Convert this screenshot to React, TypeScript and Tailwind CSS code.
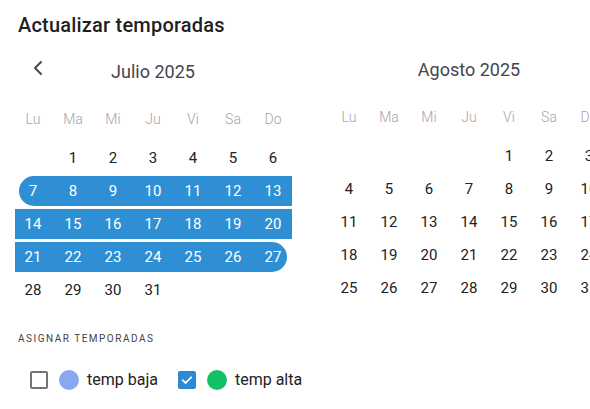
import { ChevronLeft } from "lucide-react";

const WEEKDAYS = ["Lu", "Ma", "Mi", "Ju", "Vi", "Sa", "Do"];

type Week = (number | null)[];

function buildWeeks(offset: number, days: number): Week[] {
  const cells: (number | null)[] = Array(offset).fill(null);
  for (let d = 1; d <= days; d++) cells.push(d);
  while (cells.length % 7) cells.push(null);
  const weeks: Week[] = [];
  for (let i = 0; i < cells.length; i += 7) weeks.push(cells.slice(i, i + 7));
  return weeks;
}

function WeekRow({ week, band }: { week: Week; band?: "start" | "mid" | "end" }) {
  const cells = (
    <div className="grid grid-cols-7 h-[30px] items-center">
      {week.map((d, i) => (
        <span key={i} className={`text-center text-[15px] ${band ? "text-white" : "text-[#222]"}`}>
          {d ?? ""}
        </span>
      ))}
    </div>
  );
  if (!band) return cells;
  if (band === "start")
    return (
      <div className="ml-[6px] mr-[1px] rounded-l-full bg-[#2f8fd5]">
        <div className="-ml-[6px] -mr-[1px]">{cells}</div>
      </div>
    );
  if (band === "end")
    return (
      <div className="ml-[2px] mr-[6px] rounded-r-full bg-[#2f8fd5]">
        <div className="-ml-[2px] -mr-[6px]">{cells}</div>
      </div>
    );
  return (
    <div className="ml-[2px] mr-[1px] bg-[#2f8fd5]">
      <div className="-ml-[2px] -mr-[1px]">{cells}</div>
    </div>
  );
}

function Month({ title, offset, days, bands, showPrev }: {
  title: string; offset: number; days: number; bands?: Record<number, "start" | "mid" | "end">; showPrev?: boolean;
}) {
  const weeks = buildWeeks(offset, days);
  return (
    <div className="w-[280px] shrink-0 flex flex-col">
      <div className="relative h-[24px] flex justify-center">
        {showPrev && (
          <button className="absolute left-[13px] -top-[4px] text-[#4a4a4a]">
            <ChevronLeft size={24} strokeWidth={2} />
          </button>
        )}
        <span className="text-[18px] leading-[24px] text-[#45454d]">{title}</span>
      </div>
      <div className="grid grid-cols-7 mt-[25px] h-[20px] items-center">
        {WEEKDAYS.map(w => (
          <span key={w} className="text-center text-[14px] text-[#a3a3ab] font-light">{w}</span>
        ))}
      </div>
      <div className="flex flex-col gap-[3px] mt-[14px]">
        {weeks.map((w, i) => <WeekRow key={i} week={w} band={bands?.[i]} />)}
      </div>
    </div>
  );
}

function App() {
  return (
    <div className="w-[590px] h-[409px] overflow-hidden bg-white font-['Roboto',sans-serif]">
      <h1 className="pt-[13px] pl-[18px] text-[20px] leading-[24px] tracking-[0.2px] font-medium text-[#1f1f1f]">Actualizar temporadas</h1>
      <div className="flex gap-[36px] pl-[13px] mt-[23px]">
        <Month title="Julio 2025" offset={1} days={31} showPrev bands={{ 1: "start", 2: "mid", 3: "end" }} />
        <div className="-mt-[2px]">
          <Month title="Agosto 2025" offset={4} days={31} />
        </div>
      </div>
      <div className="pl-[18px] mt-[27px]">
        <p className="text-[10px] leading-[14px] tracking-[1.5px] text-[#444]">ASIGNAR TEMPORADAS</p>
        <div className="flex items-center mt-[22px] pl-[12px] text-[16px] text-[#222]">
          <span className="w-[18px] h-[18px] border-2 border-[#757575] rounded-[2px]" />
          <span className="ml-[11px] w-[20px] h-[20px] rounded-full bg-[#88a9f2]" />
          <span className="ml-[8px]">temp baja</span>
          <span className="ml-[20px] w-[18px] h-[18px] rounded-[2px] bg-[#2b8ad3] flex items-center justify-center">
            <svg width="14" height="14" viewBox="0 0 24 24" fill="none" stroke="white" strokeWidth="3" strokeLinecap="square">
              <path d="M5 12.5l4.5 4.5L19 7.5" />
            </svg>
          </span>
          <span className="ml-[11px] w-[20px] h-[20px] rounded-full bg-[#13c066]" />
          <span className="ml-[8px]">temp alta</span>
        </div>
      </div>
    </div>
  );
}

export default App;
